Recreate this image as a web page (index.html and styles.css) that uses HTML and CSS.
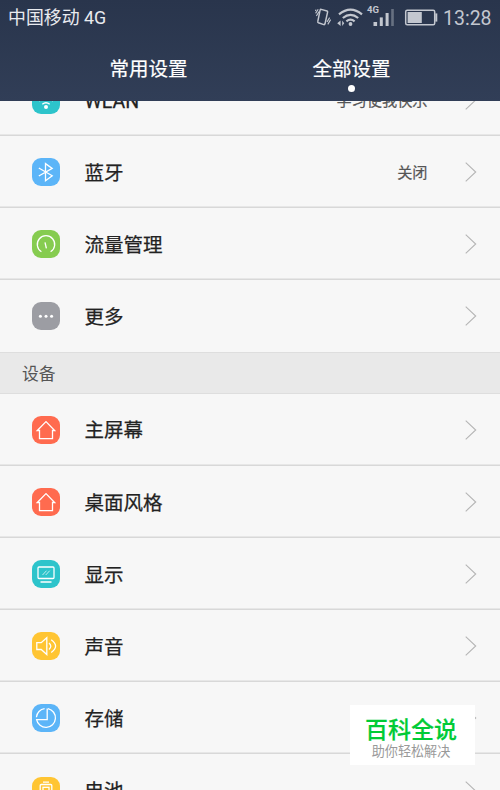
FILE: index.html
```html
<!DOCTYPE html>
<html lang="zh-CN">
<head>
  <meta charset="UTF-8" />
  <meta name="viewport" content="width=device-width, initial-scale=1.0" />
  <title>全部设置</title>
  <link rel="stylesheet" href="styles.css">
</head>
<body>
  <header class="header">
    <div class="status-bar">
      <span class="carrier">中国移动 4G</span>
      <!-- vibrate, wifi, signal, battery -->
      <svg class="status-icons" width="124" height="26" viewBox="0 0 124 26" fill="none" stroke="#c3c7cf">
        <path d="M6.2 9.4 12 11q.8.3.6 1.1L10 23.8q-.3 1-1.2.8L3.4 22.7q-.9-.4-.6-1.3L5.1 10.2q.3-1 1.1-.8z" stroke-width="1.5" />
        <path d="M3.2 9.2.6 13.4M4 11.6 1.4 16M14.6 17.6 12 22M15.6 19.6 12.8 24.4M1 9.6.4 11" stroke-width="1.1" />
        <g stroke-width="2.2">
          <path d="M24 14.4q11.5-9.6 23 0M27.8 18q7.7-6.4 15.4 0M31.4 21.4q4.1-3.4 8.2 0" />
          <circle cx="35.5" cy="24" r="1.9" fill="#c3c7cf" stroke="none" />
          <path d="m25.6 20.4-3.4 2.8 3.4 2.8zM27.2 20.4v5.6l2-2.8z" fill="#c3c7cf" stroke="none" />
        </g>
        <g fill="#c3c7cf" stroke="none">
          <rect x="58.5" y="22" width="3.6" height="4" />
          <rect x="64.8" y="17.4" width="3" height="8.6" />
          <rect x="70.6" y="13" width="3" height="13" />
          <rect x="76.2" y="9" width="2.6" height="17" opacity=".4" />
        </g>
        <rect x="90.7" y="10.2" width="29" height="14.6" rx="1.5" stroke-width="1.5" />
        <path d="M121.3 13.4v8.2" stroke-width="2" />
        <rect x="92.6" y="12" width="14.2" height="11" fill="#c3c7cf" stroke="none" />
      </svg>
      <span class="network">4G</span>
      <span class="clock">13:28</span>
    </div>
    <nav class="tabs">
      <span class="tab">常用设置</span>
      <span class="tab active">全部设置</span>
    </nav>
  </header>

  <main class="content">
    <ul class="list">
      <li class="row">
        <svg class="icon cyan" viewBox="0 0 28 28"><path d="M7 15q7-6 14 0M10.3 18.3q3.7-3.2 7.4 0" /><circle class="fill" cx="14" cy="21" r="2" /></svg>
        <span class="label latin">WLAN</span>
        <span class="value">学习使我快乐</span>
        <svg class="arrow" viewBox="0 0 12 20"><path d="m.7.7 10 9.3-10 9.3" /></svg>
      </li>
      <li class="row">
        <svg class="icon blue" viewBox="0 0 28 28"><path d="m6.8 10 13.4 7.8-6.7 5V5.6l6.7 4.8L6.8 18" /></svg>
        <span class="label">蓝牙</span>
        <span class="value">关闭</span>
        <svg class="arrow" viewBox="0 0 12 20"><path d="m.7.7 10 9.3-10 9.3" /></svg>
      </li>
      <li class="row">
        <svg class="icon green" viewBox="0 0 28 28"><path d="M9.4 21.8a8.7 8.7 0 1 1 9.2 0" /><path d="m13 12.3 1.4 6" /></svg>
        <span class="label">流量管理</span>
        <svg class="arrow" viewBox="0 0 12 20"><path d="m.7.7 10 9.3-10 9.3" /></svg>
      </li>
      <li class="row last">
        <svg class="icon gray" viewBox="0 0 28 28"><g class="fill"><circle cx="8.4" cy="14.2" r="1.5" /><circle cx="14" cy="14.2" r="1.5" /><circle cx="19.6" cy="14.2" r="1.5" /></g></svg>
        <span class="label">更多</span>
        <svg class="arrow" viewBox="0 0 12 20"><path d="m.7.7 10 9.3-10 9.3" /></svg>
      </li>
    </ul>

    <h2 class="section-title">设备</h2>

    <ul class="list">
      <li class="row">
        <svg class="icon red" viewBox="0 0 28 28"><path d="M5.3 14.5 14 5.6l8.7 8.9h-2.2v8.2h-13v-8.2z" /></svg>
        <span class="label">主屏幕</span>
        <svg class="arrow" viewBox="0 0 12 20"><path d="m.7.7 10 9.3-10 9.3" /></svg>
      </li>
      <li class="row">
        <svg class="icon red" viewBox="0 0 28 28"><path d="M5.3 14.5 14 5.6l8.7 8.9h-2.2v8.2h-13v-8.2z" /></svg>
        <span class="label">桌面风格</span>
        <svg class="arrow" viewBox="0 0 12 20"><path d="m.7.7 10 9.3-10 9.3" /></svg>
      </li>
      <li class="row">
        <svg class="icon cyan" viewBox="0 0 28 28"><rect x="6" y="7" width="16" height="11.5" rx="1" /><path d="M8.5 22h11" /><path d="m10.5 15 4-4.3m-.8 4.3 4-4.3" stroke-width=".7" /></svg>
        <span class="label">显示</span>
        <svg class="arrow" viewBox="0 0 12 20"><path d="m.7.7 10 9.3-10 9.3" /></svg>
      </li>
      <li class="row">
        <svg class="icon yellow" viewBox="0 0 28 28"><path d="M4.8 10.7h4.4l5.6-5v16.8l-5.6-5H4.8zM17 11q3.6 3.2 0 6.4M19.2 7.7q8.8 6.4 0 12.8" /></svg>
        <span class="label">声音</span>
        <svg class="arrow" viewBox="0 0 12 20"><path d="m.7.7 10 9.3-10 9.3" /></svg>
      </li>
      <li class="row">
        <svg class="icon blue" viewBox="0 0 28 28"><path d="M12.6 4.6a9.5 9.5 0 0 0-8.2 8.6M16 4.6A9.5 9.5 0 1 1 4.6 15.6h10.6V4.4" /></svg>
        <span class="label">存储</span>
        <svg class="arrow" viewBox="0 0 12 20"><path d="m.7.7 10 9.3-10 9.3" /></svg>
      </li>
      <li class="row">
        <svg class="icon yellow" viewBox="0 0 28 28"><path d="M11 5.2h6" /><rect x="8.2" y="7.5" width="11.6" height="15" rx="1" /><rect x="11" y="10.3" width="6" height="9.4" /></svg>
        <span class="label">电池</span>
        <svg class="arrow" viewBox="0 0 12 20"><path d="m.7.7 10 9.3-10 9.3" /></svg>
      </li>
    </ul>
  </main>

  <div class="watermark">
    <strong>百科全说</strong>
    <span>助你轻松解决</span>
  </div>
</body>
</html>
```
FILE: styles.css
```css
* {
  box-sizing: border-box;
}

body {
  margin: 0;
  height: 790px;
  display: flex;
  flex-direction: column;
  overflow: hidden;
  position: relative;
  background: #f7f7f7;
  font-family: Roboto, "Noto Sans CJK SC", sans-serif;
}

.header {
  flex: none;
  height: 101px;
  background: linear-gradient(#29354c, #313e57);
  color: #fff;
}

.status-bar {
  height: 35px;
  padding: 0 9px 0 8px;
  display: flex;
  align-items: center;
  position: relative;
}

.carrier {
  flex: 1;
  font-size: 17.9px;
  line-height: 35px;
  color: #e9ebef;
}

.status-icons {
  flex: none;
  margin-right: 4px;
  margin-bottom: 9px;
}

.network {
  position: absolute;
  left: 367px;
  top: 4px;
  font-size: 9.5px;
  font-weight: bold;
  line-height: 12px;
  color: #c3c7cf;
}

.clock {
  width: 48px;
  padding-top: 2px;
  font-size: 19.5px;
  line-height: 35px;
  color: #c3c7cf;
  white-space: nowrap;
}

.tabs {
  display: grid;
  grid-template-columns: 203px 203px;
  justify-content: center;
  height: 66px;
}

.tab {
  position: relative;
  padding-top: 2px;
  text-align: center;
  font-size: 19.5px;
  line-height: 66px;
  -webkit-text-stroke: 0.2px;
}

.tab.active::after {
  content: "";
  position: absolute;
  left: 98px;
  top: 50px;
  width: 7px;
  height: 7px;
  border-radius: 50%;
  background: #fff;
}

.content {
  flex: 1;
  min-height: 0;
  overflow: hidden;
}

.list {
  margin: 0;
  padding: 0;
  list-style: none;
}

.list:first-child {
  margin-top: -37.4px;
}

.row {
  display: flex;
  align-items: center;
  height: 72.2px;
  padding: 0 23px 0 32px;
  box-shadow: inset 0 -1.5px #d8d8d8;
}

.row.last {
  box-shadow: none;
}

.icon {
  flex: none;
  width: 28px;
  height: 28px;
  margin-right: 24.5px;
  border-radius: 9px;
  fill: none;
  stroke: #fff;
  stroke-width: 1.3;
}

.icon .fill {
  fill: #fff;
  stroke: none;
}

.cyan { background: #2dc4cb; }
.blue { background: #5cb5f8; }
.green { background: #86cc50; }
.gray { background: #9c9da3; }
.red { background: #ff6b4f; }
.yellow { background: #ffc533; }

.label {
  flex: 1;
  padding-bottom: 1.4px;
  font-size: 19.5px;
  color: #222;
  -webkit-text-stroke: 0.25px;
}

.label.latin {
  padding: 3px 0 0;
}

.value {
  margin-right: 37.5px;
  padding-bottom: 1px;
  font-size: 15.2px;
  color: #555;
  -webkit-text-stroke: 0.2px;
}

.arrow {
  flex: none;
  width: 12px;
  height: 20px;
  fill: none;
  stroke: #b5b5b5;
  stroke-width: 1.1;
}

.section-title {
  margin: 0;
  height: 41.2px;
  padding-left: 22px;
  border-top: 1px solid #dedede;
  border-bottom: 1px solid #dedede;
  background: #e9e9e9;
  font-size: 16.8px;
  font-weight: normal;
  line-height: 42px;
  color: #555;
}

.watermark {
  position: absolute;
  left: 350px;
  top: 705px;
  width: 125px;
  height: 60px;
  padding-top: 11px;
  background: #fff;
  text-align: center;
}

.watermark strong,
.watermark span {
  display: block;
}

.watermark strong {
  padding-right: 3px;
  font-size: 23px;
  font-weight: 500;
  line-height: 29px;
  color: #00cb36;
  -webkit-text-stroke: 0.2px;
}

.watermark span {
  padding-right: 3px;
  font-size: 13.1px;
  line-height: 14px;
  color: #999;
}
```
